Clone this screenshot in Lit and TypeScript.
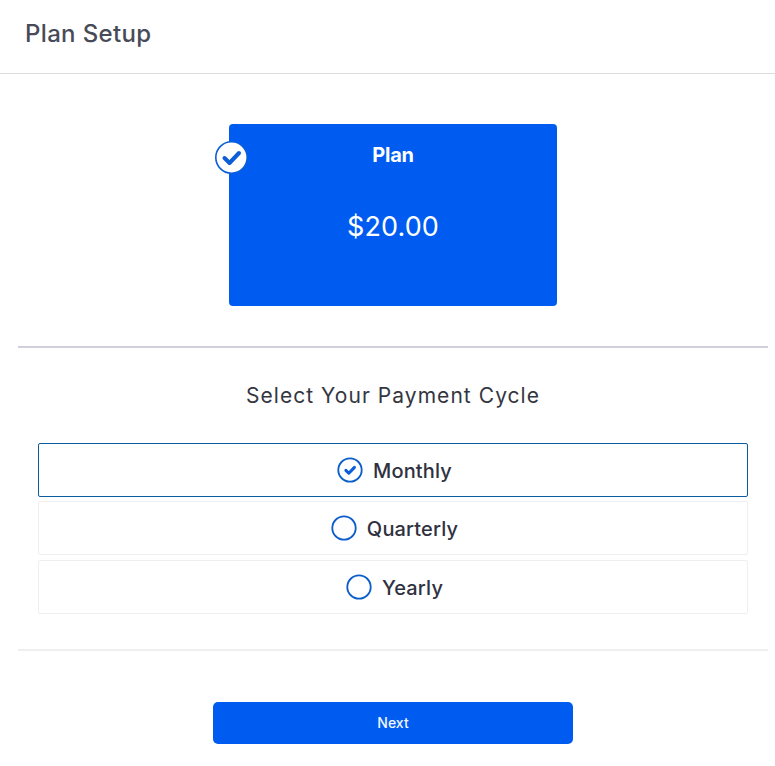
import { LitElement, html, css, svg } from "lit";
import { customElement } from "lit/decorators.js";

const options = [
  { label: "Monthly", selected: true },
  { label: "Quarterly", selected: false },
  { label: "Yearly", selected: false },
];

const tick = svg`<path d="M8.2 12.3l2.7 2.7 5.2-5.4" fill="none" stroke="#0b5ed7" stroke-width="2.8" stroke-linecap="round" stroke-linejoin="round"/>`;

@customElement("app-root")
export class AppRoot extends LitElement {
  static styles = css`
    :host { display: block; width: 775px; height: 766px; background: #fff; font-family: Inter, "Noto Sans", sans-serif; color: #2f3140; }
    * { box-sizing: border-box; }
    header { height: 74px; border-bottom: 1px solid #dcdcdf; padding: 19px 0 0 25px; }
    h1 { margin: 0; font-size: 24px; line-height: 30px; font-weight: 500; color: #484b57; letter-spacing: 0.35px; }
    main { padding: 50px 7px 0 18px; display: flex; flex-direction: column; }
    .plan-wrap { display: flex; justify-content: center; }
    .plan { position: relative; width: 328px; height: 182px; background: #005cf0; border-radius: 4px; color: #fff; display: flex; flex-direction: column; align-items: center; }
    .plan h2 { margin: 19px 0 0; font-size: 20px; line-height: 24px; font-weight: 700; letter-spacing: -0.2px; }
    .plan .price { margin-top: 39px; font-size: 27px; line-height: 42px; font-weight: 400; letter-spacing: 0.1px; }
    .badge { position: absolute; left: -14px; top: 17px; width: 33px; height: 33px; display: block; }
    .rule { height: 2px; background: #cfd0dc; margin-top: 40px; }
    h3 { margin: 33px 0 0; text-align: center; font-size: 21px; line-height: 30px; font-weight: 400; color: #34363f; letter-spacing: 1.05px; }
    .options { margin: 32px 20px 0; display: flex; flex-direction: column; gap: 4px 0; }
    .option { height: 54px; border: 1px solid #efeff1; border-radius: 2px; padding-left: 3px; display: flex; align-items: center; justify-content: center; gap: 10px; font-size: 20px; font-weight: 500; color: #2f3140; letter-spacing: 0.15px; }
    .option:last-child { margin-top: 1px; }
    .option.selected { border-color: #0b5c9e; }
    .option svg { width: 26px; height: 26px; flex: none; }
    .option span { margin-top: 2px; }
    .rule2 { height: 2px; background: #efeff1; margin-top: 35px; }
    .actions { display: flex; justify-content: center; margin-top: 51px; }
    button { width: 360px; height: 42px; border: none; border-radius: 5px; background: #005cf0; color: #f0f6ff; font: 500 14px/42px Inter, sans-serif; padding: 0; }
  `;

  render() {
    return html`
      <header><h1>Plan Setup</h1></header>
      <main>
        <div class="plan-wrap">
          <div class="plan">
            <svg class="badge" viewBox="0 0 33 33" aria-hidden="true">
              <circle cx="16.5" cy="16.5" r="15.7" fill="#fff" stroke="#0b5ed7" stroke-width="1.6"/>
              <path d="M9.5 17l5 5 9.5-10" fill="none" stroke="#0b5ed7" stroke-width="4" stroke-linecap="round" stroke-linejoin="round"/>
            </svg>
            <h2>Plan</h2>
            <div class="price">$20.00</div>
          </div>
        </div>
        <div class="rule"></div>
        <h3>Select Your Payment Cycle</h3>
        <div class="options">
          ${options.map(
            (o) => html`
              <div class="option ${o.selected ? "selected" : ""}">
                <svg viewBox="0 0 24 24" aria-hidden="true">
                  <circle cx="12" cy="12" r="10.8" fill="none" stroke="#0b5ec9" stroke-width="1.7"/>
                  ${o.selected ? tick : ""}
                </svg>
                <span>${o.label}</span>
              </div>
            `
          )}
        </div>
        <div class="rule2"></div>
        <div class="actions"><button>Next</button></div>
      </main>
    `;
  }
}
